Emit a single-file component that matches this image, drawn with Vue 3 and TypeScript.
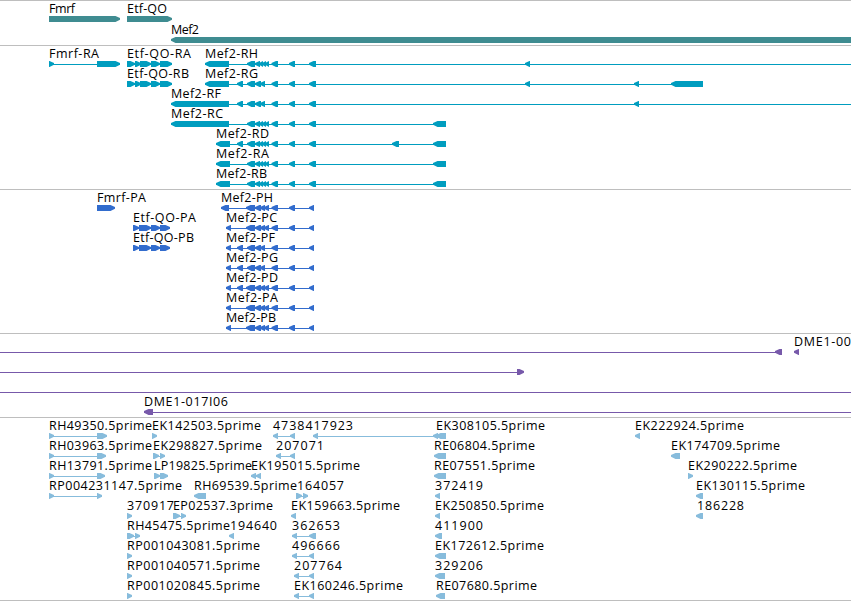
<template>
  <main class="browser">
    <section v-for="track in tracks" :key="track.id" :class="['track', track.id]">
      <svg class="lane" :width="viewWidth" :height="track.height">
        <g v-for="(row, r) in track.rows" :key="r" :transform="`translate(0 ${r * track.pitch})`">
          <g v-for="(f, i) in row" :key="i" class="feature">
            <rect
              v-if="f.exons.length !== 1 || f.line"
              :x="span(f)[0]"
              y="18"
              :width="span(f)[1] - span(f)[0]"
              height="1"
            />
            <polygon v-for="(exon, e) in f.exons" :key="e" :points="arrow(exon, f.dir)" />
            <text v-if="f.label" class="label" :x="f.x" y="12" :textLength="f.width">{{ f.label }}</text>
          </g>
        </g>
      </svg>
    </section>
  </main>
</template>

<script setup lang="ts">
type Range = [number, number];
type Direction = 'left' | 'right';

interface Feature {
  label: string;
  x: number;
  width: number;
  dir: Direction;
  exons: Range[];
  line?: Range;
}

interface Track {
  id: string;
  height: number;
  pitch: number;
  rows: Feature[][];
}

const viewWidth = 851;
const tip = 4.5;

// x and end are the label's extent, exons are drawn as arrow blocks
function feat(label: string, x: number, end: number, dir: Direction, exons: Range[], line?: Range): Feature {
  return { label, x, width: end - x, dir, exons, line };
}

function span(f: Feature): Range {
  return f.line ?? [f.exons[0][0], f.exons[f.exons.length - 1][1]];
}

function arrow([a, b]: Range, dir: Direction): string {
  if (dir === 'left') {
    const s = Math.min(a + tip, b);
    return `${a},17 ${s},15 ${b},15 ${b},21 ${s},21 ${a},18.7`;
  }
  const s = Math.max(b - tip, a);
  return `${a},15 ${s},15 ${b},17 ${b},18.7 ${s},21 ${a},21`;
}

const small: Range = [237, 243];
const cluster: Range[] = [[247, 255], [255, 260], [259, 263], [262, 266], [265, 269]];
const shortCluster: Range[] = [[247, 255], [255, 261], [260, 265]];
const middle: Range[] = [[271.5, 278], [289, 295], [309, 316]];

const etfTranscript: Range[] = [[127, 135], [135, 141], [140, 151], [151, 160], [160, 172]];
const etfProtein: Range[] = [[133, 139], [139, 151], [151, 160], [160, 170]];

const proteinTail: Range[] = [[271.5, 278], [289, 295], [309, 314]];
const proteinFive: Range[] = [[246, 255], [255, 261], [260, 265], [264, 269], ...proteinTail];
const start: Range = [226, 231];

const tracks: Track[] = [
  {
    id: 'gene',
    height: 44,
    pitch: 21,
    rows: [
      [
        feat('Fmrf', 49, 75, 'right', [[49, 120]]),
        feat('Etf-QO', 127, 167, 'right', [[127, 172]]),
      ],
      [feat('Mef2', 171, 199, 'left', [[171, 860]])],
    ],
  },
  {
    id: 'transcript',
    height: 143,
    pitch: 20,
    rows: [
      [
        feat('Fmrf-RA', 49, 99, 'right', [[49, 54], [97, 120]]),
        feat('Etf-QO-RA', 127, 191, 'right', etfTranscript),
        feat('Mef2-RH', 205, 258, 'left', [[205, 229], ...cluster, ...middle, [525, 530]], [205, 851]),
      ],
      [
        feat('Etf-QO-RB', 127, 189, 'right', etfTranscript),
        feat('Mef2-RG', 205, 258, 'left', [[205, 229], small, ...shortCluster, ...middle, [525, 530], [634, 639], [671, 703]]),
      ],
      [feat('Mef2-RF', 171, 221, 'left', [[171, 229], small, ...shortCluster, ...middle, [634, 639]], [171, 851])],
      [feat('Mef2-RC', 171, 223, 'left', [[171, 229], ...cluster, ...middle, [433, 446]])],
      [feat('Mef2-RD', 216, 269, 'left', [[216, 230], small, ...cluster, ...middle, [392, 399], [433, 446]])],
      [feat('Mef2-RA', 216, 269, 'left', [[216, 230], ...cluster, ...middle, [433, 446]])],
      [feat('Mef2-RB', 216, 267, 'left', [[216, 230], ...cluster, ...middle, [433, 446]])],
    ],
  },
  {
    id: 'protein',
    height: 143,
    pitch: 20,
    rows: [
      [
        feat('Fmrf-PA', 97, 146, 'right', [[97, 115]]),
        feat('Mef2-PH', 221, 273, 'left', [[221, 229], ...proteinFive]),
      ],
      [
        feat('Etf-QO-PA', 133, 196, 'right', etfProtein),
        feat('Mef2-PC', 226, 277, 'left', [start, ...proteinFive]),
      ],
      [
        feat('Etf-QO-PB', 133, 194, 'right', etfProtein),
        feat('Mef2-PF', 226, 275, 'left', [start, small, ...shortCluster, ...proteinTail]),
      ],
      [feat('Mef2-PG', 226, 278, 'left', [start, small, ...shortCluster, ...proteinTail])],
      [feat('Mef2-PD', 226, 278, 'left', [start, small, ...proteinFive])],
      [feat('Mef2-PA', 226, 278, 'left', [start, ...proteinFive])],
      [feat('Mef2-PB', 226, 276, 'left', [start, ...proteinFive])],
    ],
  },
  {
    id: 'clone',
    height: 83,
    pitch: 20,
    rows: [
      [
        feat('', 0, 1, 'left', [[775, 782]], [0, 782]),
        feat('DME1-00', 794, 851, 'left', [[794, 799]]),
      ],
      [feat('', 0, 1, 'right', [[517, 524]], [0, 523])],
      [feat('', 0, 1, 'left', [], [0, 851])],
      [feat('DME1-017I06', 144, 228, 'left', [[144, 153]], [144, 851])],
    ],
  },
  {
    id: 'est',
    height: 182,
    pitch: 20,
    rows: [
      [
        feat('RH49350.5prime', 49, 152, 'right', [[49, 54], [97, 107]]),
        feat('EK142503.5prime', 152, 261, 'right', [[152, 157]]),
        feat('4738417923', 273, 353, 'left', [[273, 278], [290, 295]]),
        feat('', 0, 1, 'left', [[313, 318], [433, 438]]),
        feat('EK308105.5prime', 436, 545, 'left', [[436, 446]]),
        feat('EK222924.5prime', 635, 744, 'left', [[635, 640]]),
      ],
      [
        feat('RH03963.5prime', 49, 152, 'right', [[49, 54], [97, 106]]),
        feat('EK298827.5prime', 153, 262, 'right', [[153, 159], [160, 165]]),
        feat('207071', 276, 324, 'left', [[276, 281], [290, 295]]),
        feat('RE06804.5prime', 434, 535, 'left', [[434, 446]]),
        feat('EK174709.5prime', 671, 780, 'left', [[671, 680]]),
      ],
      [
        feat('RH13791.5prime', 49, 152, 'right', [[49, 54], [97, 105]]),
        feat('LP19825.5prime', 154, 252, 'right', [[154, 160], [160, 168]]),
        feat('EK195015.5prime', 251, 360, 'left', [[251, 256], [256, 261]]),
        feat('RE07551.5prime', 434, 535, 'left', [[434, 446]]),
        feat('EK290222.5prime', 688, 797, 'right', [[688, 693]]),
      ],
      [
        feat('RP004231147.5prime', 49, 182, 'right', [[49, 54], [97, 102]]),
        feat('RH69539.5prime', 194, 297, 'left', [[194, 206]]),
        feat('164057', 297, 344, 'right', [[296, 302], [303, 308]]),
        feat('372419', 435, 483, 'left', [[435, 440]]),
        feat('EK130115.5prime', 696, 805, 'left', [[696, 703]]),
      ],
      [
        feat('370917', 127, 174, 'right', [[127, 132]]),
        feat('EP02537.3prime', 173, 273, 'right', [[173, 180], [181, 186]]),
        feat('EK159663.5prime', 291, 400, 'left', [[291, 296]]),
        feat('EK250850.5prime', 435, 544, 'left', [[435, 440]]),
        feat('186228', 697, 744, 'left', [[696, 703]]),
      ],
      [
        feat('RH45475.5prime', 127, 230, 'right', [[127, 134], [135, 140]]),
        feat('194640', 230, 277, 'left', [[229, 234]]),
        feat('362653', 292, 340, 'left', [[292, 297], [309, 316]]),
        feat('411900', 435, 483, 'left', [[435, 442]]),
      ],
      [
        feat('RP001043081.5prime', 127, 260, 'right', [[127, 132]]),
        feat('496666', 292, 340, 'left', [[292, 297], [309, 314]]),
        feat('EK172612.5prime', 435, 544, 'left', [[435, 446]]),
      ],
      [
        feat('RP001040571.5prime', 127, 260, 'right', [[127, 132]]),
        feat('207764', 294, 342, 'left', [[294, 299], [309, 314]]),
        feat('329206', 435, 483, 'left', [[435, 445]]),
      ],
      [
        feat('RP001020845.5prime', 127, 260, 'right', [[127, 132]]),
        feat('EK160246.5prime', 294, 403, 'left', [[294, 299], [309, 314]]),
        feat('RE07680.5prime', 436, 537, 'left', [[436, 445]]),
      ],
    ],
  },
];
</script>

<style>
body {
  margin: 0;
  background: #ffffff;
  overflow: hidden;
}
</style>

<style scoped>
.browser {
  display: flex;
  flex-direction: column;
  width: 851px;
  border-bottom: 1px solid #bebebe;
}

.track {
  border-top: 1px solid #bebebe;
}

.lane {
  display: block;
}

.label {
  font-family: "Open Sans", "Noto Sans", sans-serif;
  font-size: 12.5px;
  fill: #000000;
}

.gene .feature {
  fill: #3f8c91;
}

.transcript .feature {
  fill: #009dbf;
}

.protein .feature {
  fill: #326ccd;
}

.clone .feature {
  fill: #7759aa;
}

.est .feature {
  fill: #87bcdc;
}
</style>
